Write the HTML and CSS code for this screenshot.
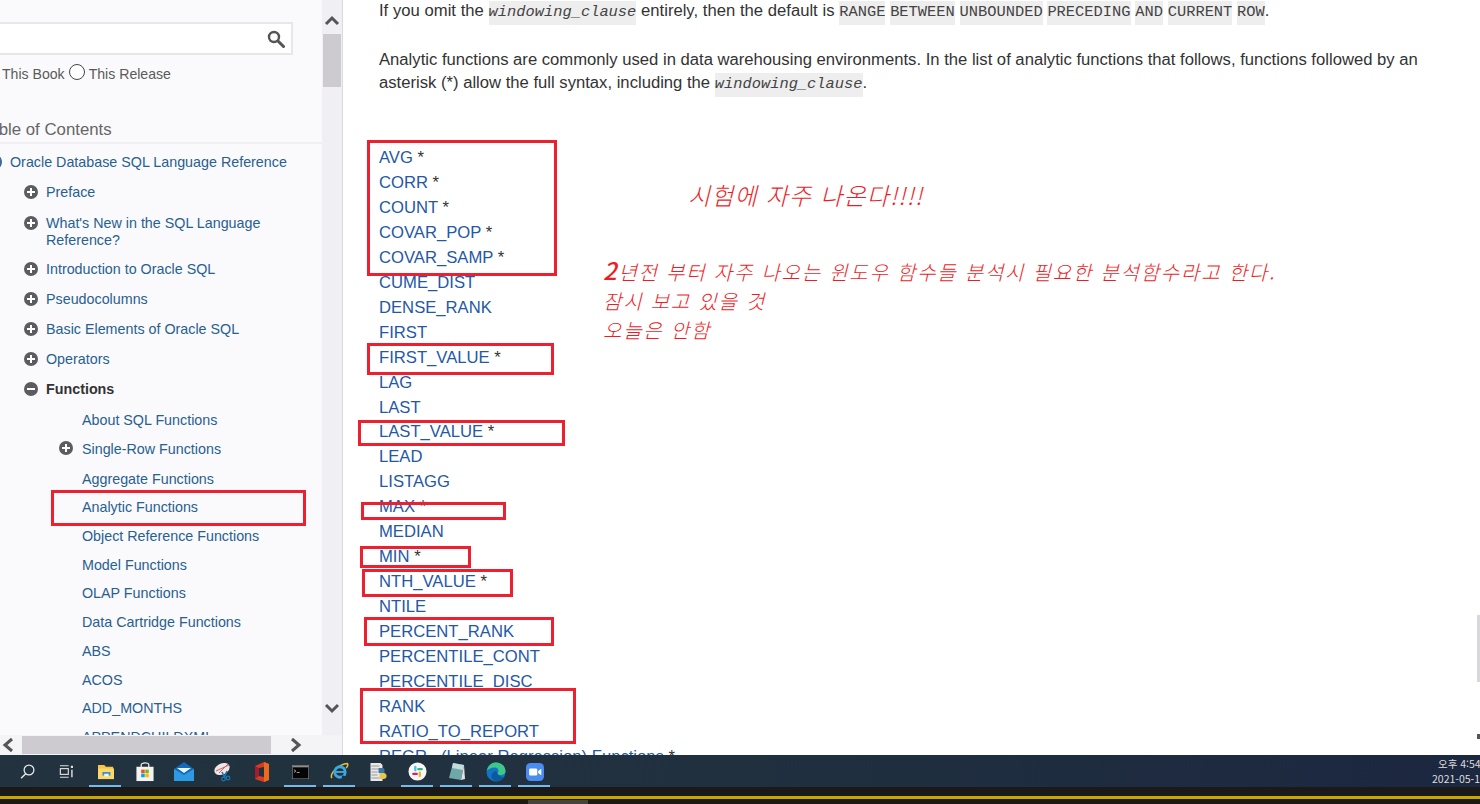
FILE: index.html
```html
<!DOCTYPE html>
<html lang="ko">
<head>
<meta charset="utf-8">
<title>Analytic Functions</title>
<link rel="stylesheet" href="styles.css">
</head>
<body>
<div class="app">
  <div class="main">
    <aside class="side">
      <div class="side-top">
        <div class="toc-pane">
          <div class="search">
            <svg class="search-icon" width="18" height="18" viewBox="0 0 18 18"><circle cx="7" cy="7" r="5" fill="none" stroke="#555" stroke-width="2.4"/><path d="M11 11l5.500 5.500" stroke="#555" stroke-width="3" stroke-linecap="round"/></svg>
          </div>
          <div class="scope"><span>This Book</span><span class="radio"></span><span>This Release</span></div>
          <div class="toc-title">Table of Contents</div>
          <div class="tree">
            <div class="row root"><span class="dot-root"></span><a>Oracle Database SQL Language Reference</a></div>
            <div class="row l1 r-a"><span class="exp"></span><a>Preface</a></div>
            <div class="row l1 tall"><span class="exp"></span><a>What's New in the SQL Language Reference?</a></div>
            <div class="row l1"><span class="exp"></span><a>Introduction to Oracle SQL</a></div>
            <div class="row l1"><span class="exp"></span><a>Pseudocolumns</a></div>
            <div class="row l1"><span class="exp"></span><a>Basic Elements of Oracle SQL</a></div>
            <div class="row l1"><span class="exp"></span><a>Operators</a></div>
            <div class="row l1 open"><span class="exp minus"></span><a>Functions</a></div>
            <div class="row l2 r-b"><a>About SQL Functions</a></div>
            <div class="row l2 r-c"><span class="exp"></span><a>Single-Row Functions</a></div>
            <div class="row l2"><a>Aggregate Functions</a></div>
            <div class="row l2"><a>Analytic Functions</a></div>
            <div class="row l2"><a>Object Reference Functions</a></div>
            <div class="row l2"><a>Model Functions</a></div>
            <div class="row l2"><a>OLAP Functions</a></div>
            <div class="row l2"><a>Data Cartridge Functions</a></div>
            <div class="row l2"><a>ABS</a></div>
            <div class="row l2"><a>ACOS</a></div>
            <div class="row l2"><a>ADD_MONTHS</a></div>
            <div class="row l2"><a>APPENDCHILDXML</a></div>
          </div>
        </div>
        <div class="vbar">
          <svg class="arrow" width="16" height="12" viewBox="0 0 16 12"><path d="M2 10l6-6 6 6" fill="none" stroke="#555" stroke-width="3"/></svg>
          <div class="vthumb"></div>
          <svg class="arrow arrow-down" width="16" height="12" viewBox="0 0 16 12"><path d="M2 2l6 6 6-6" fill="none" stroke="#555" stroke-width="3"/></svg>
        </div>
      </div>
      <div class="hbar">
        <svg width="12" height="16" viewBox="0 0 12 16"><path d="M10 2L3 8l7 6" fill="none" stroke="#555" stroke-width="3"/></svg>
        <div class="hthumb"></div>
        <svg class="arrow-right" width="12" height="16" viewBox="0 0 12 16"><path d="M2 2l7 6-7 6" fill="none" stroke="#555" stroke-width="3"/></svg>
      </div>
    </aside>
    <main class="content">
      <p class="para first">If you omit the <code class="var">windowing_clause</code> entirely, then the default is <code>RANGE</code> <code>BETWEEN</code> <code>UNBOUNDED</code> <code>PRECEDING</code> <code>AND</code> <code>CURRENT</code> <code>ROW</code>.</p>
      <p class="para second">Analytic functions are commonly used in data warehousing environments. In the list of analytic functions that follows, functions followed by an asterisk (*) allow the full syntax, including the <code class="var">windowing_clause</code>.</p>
      <ul class="fn-list">
        <li><a>AVG</a> *</li>
        <li><a>CORR</a> *</li>
        <li><a>COUNT</a> *</li>
        <li><a>COVAR_POP</a> *</li>
        <li><a>COVAR_SAMP</a> *</li>
        <li><a>CUME_DIST</a></li>
        <li><a>DENSE_RANK</a></li>
        <li><a>FIRST</a></li>
        <li><a>FIRST_VALUE</a> *</li>
        <li><a>LAG</a></li>
        <li><a>LAST</a></li>
        <li><a>LAST_VALUE</a> *</li>
        <li><a>LEAD</a></li>
        <li><a>LISTAGG</a></li>
        <li><a>MAX</a> *</li>
        <li><a>MEDIAN</a></li>
        <li><a>MIN</a> *</li>
        <li><a>NTH_VALUE</a> *</li>
        <li><a>NTILE</a></li>
        <li><a>PERCENT_RANK</a></li>
        <li><a>PERCENTILE_CONT</a></li>
        <li><a>PERCENTILE_DISC</a></li>
        <li><a>RANK</a></li>
        <li><a>RATIO_TO_REPORT</a></li>
        <li><a>REGR_ (Linear Regression) Functions</a> *</li>
      </ul>
      <div class="page-thumb"></div>
      <div class="page-mark"></div>
    </main>
  </div>
  <footer class="taskbar">
    <div class="tb-icon"><svg width="15" height="15" viewBox="0 0 20 20"><circle cx="12" cy="8" r="6.500" fill="none" stroke="#e8e8e8" stroke-width="1.700"/><path d="M7.500 13l-6 6" stroke="#e8e8e8" stroke-width="2"/></svg></div>
    <div class="tb-icon"><svg width="15" height="13" viewBox="0 0 20 18"><path d="M1 1h12M1 17h12" stroke="#ddd" stroke-width="1.600"/><rect x="1.500" y="5" width="11" height="8" fill="none" stroke="#ddd" stroke-width="1.600"/><path d="M16 1h3v3h-3zM16.500 6.500h2V17h-2z" fill="#ddd"/></svg></div>
    <div class="tb-icon on"><svg width="18" height="16" viewBox="0 0 20 18"><path d="M1 1h7l2 2h8l1 14H1z" fill="#f6c545"/><path d="M1 5h18v12H1z" fill="#fbd968"/><path d="M6 9h9v4H6z" fill="#3f8fd2"/><path d="M8 11h5v3H8z" fill="#f3f3f3"/></svg></div>
    <div class="tb-icon"><svg width="20" height="20" viewBox="0 0 20 21"><path d="M6 6V3a4 2 0 0 1 8 0v3" fill="none" stroke="#eee" stroke-width="1.300"/><rect x="1" y="5" width="18" height="15" fill="#f2f2f2"/><rect x="6" y="8" width="3.700" height="3.700" fill="#f25022"/><rect x="10.300" y="8" width="3.700" height="3.700" fill="#7fba00"/><rect x="6" y="12.300" width="3.700" height="3.700" fill="#00a4ef"/><rect x="10.300" y="12.300" width="3.700" height="3.700" fill="#ffb900"/></svg></div>
    <div class="tb-icon"><svg width="20" height="19" viewBox="0 0 20 19"><path d="M10 0l10 7v12H0V7z" fill="#1669b8"/><path d="M0 7l10 6 10-6v12H0z" fill="#2f9ae4"/><path d="M3 6h14l-7 5z" fill="#e9f5fd"/></svg></div>
    <div class="tb-icon"><svg width="20" height="20" viewBox="0 0 20 20"><ellipse cx="9" cy="7" rx="8" ry="5.500" transform="rotate(-25 9 7)" fill="#f1e6e6"/><path d="M3 9l13-6M6 11l9-9" stroke="#c8646e" stroke-width="1"/><path d="M9 10l3 6M14 9l-3 7" stroke="#1c78b4" stroke-width="1.600"/><circle cx="10.500" cy="17" r="1.800" fill="none" stroke="#1c78b4" stroke-width="1.200"/><circle cx="15" cy="16" r="1.800" fill="none" stroke="#1c78b4" stroke-width="1.200"/></svg></div>
    <div class="tb-icon"><svg width="16" height="20" viewBox="0 0 16 20"><path d="M1 4l9-4 5 2v16l-5 2-9-3z" fill="#d83b22"/><path d="M10 0l5 2v16l-5 2z" fill="#ea6a1f"/><path d="M5 6l5-1v10l-5-1z" fill="#20303c"/><path d="M1 4l4 2v8l-4 3z" fill="#a51d2d"/></svg></div>
    <div class="tb-icon on"><svg width="17" height="14" viewBox="0 0 18 15"><rect x="0" y="0" width="18" height="15" fill="#050505" stroke="#9a9a9a" stroke-width="1"/><rect x="0.500" y="0.500" width="17" height="2" fill="#8d8d8d"/><path d="M2 5l2 1.500L2 8M5 8h3" fill="none" stroke="#ddd" stroke-width="0.800"/></svg></div>
    <div class="tb-icon on"><svg width="19" height="19" viewBox="0 0 20 20"><path d="M2 17C-1 12 10 2 18 1.500c1.500 1 .5 3-1 5" fill="none" stroke="#eec13a" stroke-width="1.500"/><circle cx="10.500" cy="10.500" r="5.500" fill="none" stroke="#3aa7e0" stroke-width="3"/><path d="M6 10.500h9.500" stroke="#3aa7e0" stroke-width="2"/><path d="M13 14l4 1.500-5 2z" fill="#20303c"/></svg></div>
    <div class="tb-icon"><svg width="19" height="20" viewBox="0 0 18 20"><path d="M1 1h10l2 2v16H1z" fill="#e8e8e8"/><path d="M2 4h8M2 7h7M2 10h6M2 13h6M2 16h8" stroke="#9a9a9a" stroke-width="1"/><path d="M9 6h4a2 2 0 0 1 2 2v3H9z" fill="#3d77a8"/><path d="M10 11h4a3 3 0 0 1 3 2v2a3 3 0 0 1-3 2h-4z" fill="#e8c84a"/></svg></div>
    <div class="tb-icon on"><svg width="19" height="19" viewBox="0 0 20 20"><circle cx="10" cy="10" r="9.500" fill="#f7f7f7"/><rect x="6.500" y="4" width="2.400" height="6" rx="1.200" fill="#36c5f0"/><rect x="11.500" y="4.500" width="2.400" height="6" rx="1.200" fill="#2eb67d" transform="rotate(90 12.700 7.500)"/><rect x="11.200" y="10" width="2.400" height="6" rx="1.200" fill="#ecb22e"/><rect x="6.200" y="9.500" width="2.400" height="6" rx="1.200" fill="#e01e5a" transform="rotate(90 7.400 12.500)"/></svg></div>
    <div class="tb-icon on"><svg width="18" height="20" viewBox="0 0 18 20"><path d="M5 1l11 2-3 15-12-2z" fill="#6fa8ab"/><path d="M5 1l11 2-1 5-11-2z" fill="#c5dadb"/><path d="M13 18l3-15 1 14z" fill="#e2e2e2"/></svg></div>
    <div class="tb-icon on"><svg width="20" height="20" viewBox="0 0 20 20"><circle cx="10" cy="10" r="9.500" fill="#1174c4"/><path d="M.8 9C2 3 6 .5 10 .5c5.500 0 9.500 4 9.500 8.500 0 3-2.500 4-5 4-2 0-3-.8-3-1.500 0-.7 1-1 1-2.500C12.500 7 11 5.500 9 5.500 4.500 5.500 2 7.500.8 9z" fill="#3fc78a"/><path d="M8 18.500c-3-1.500-3.500-7 .5-9 1-.4 2 0 2.500.8.300 2.500 2.500 4.700 5.500 4.700l2 .3c-2 3-6.500 4.500-10.500 3.200z" fill="#0a5a9e"/></svg></div>
    <div class="tb-icon on"><svg width="18" height="18" viewBox="0 0 20 20"><rect width="20" height="20" rx="5" fill="#4a8cf0"/><rect x="3.500" y="6" width="9" height="8" rx="1.500" fill="#fff"/><path d="M13.500 9l3.500-2.500v7L13.500 11z" fill="#fff"/></svg></div>
    <div class="clock"><div class="time">오후 4:54</div><div class="date">2021-05-18</div></div>
  </footer>
  <div class="strip"><div class="strip-line"></div><div class="strip-thumb"></div></div>

  <div class="ann box-toc"></div>
  <div class="ann box-1"></div>
  <div class="ann box-2"></div>
  <div class="ann box-3"></div>
  <div class="ann box-4"></div>
  <div class="ann box-5"></div>
  <div class="ann box-6"></div>
  <div class="ann box-7"></div>
  <div class="ann box-8"></div>
  <div class="note note-a">시험에 자주 나온다!!!!</div>
  <div class="note note-b"><b>2</b>년전 부터 자주 나오는 윈도우 함수들 분석시 필요한 분석함수라고 한다.<br>잠시 보고 있을 것<br>오늘은 안함</div>
</div>
</body>
</html>
```
FILE: styles.css
```css
* { box-sizing: border-box; }
html, body { margin: 0; padding: 0; background: #fff; }
body { font-family: "Liberation Sans", Arial, sans-serif; overflow: hidden; }
.app { position: relative; width: 1480px; height: 804px; display: flex; flex-direction: column; overflow: hidden; }
.main { height: 755px; display: flex; overflow: hidden; }

/* sidebar */
.side { width: 343px; flex: none; display: flex; flex-direction: column; border-right: 1px solid #d9d9e0; }
.side-top { flex: 1; min-height: 0; display: flex; }
.toc-pane { width: 322px; flex: none; background: #fafafc; overflow: hidden; padding-top: 22px; }
.search { width: 303px; height: 33px; margin-left: -10px; background: #fff; border: 2px solid #e6e6ec; display: flex; align-items: center; justify-content: flex-end; padding-right: 6px; }
.scope { display: flex; align-items: center; gap: 4px; height: 20px; margin-top: 9px; padding-left: 2px; font-size: 14.100px; color: #5a5a5a; }
.radio { width: 16px; height: 16px; margin: -5px 0 0 0; border: 1.500px solid #444; border-radius: 50%; background: #fff; }
.toc-title { margin: 36px 0 0 -19px; height: 20px; line-height: 20px; font-size: 16.800px; color: #666; white-space: nowrap; }
.tree { margin-top: 2px; padding-top: 4px; border-top: 2px solid #f0f0f3; font-size: 14.300px; line-height: 16.500px; color: #28608f; }
.row { position: relative; display: flex; align-items: flex-start; height: 30px; padding-top: 6px; white-space: nowrap; }
.row a { color: inherit; }
.root { padding-left: 10px; }
.l1 { padding-left: 46px; }
.r-a { height: 31px; }
.l1.tall { height: 46px; white-space: normal; padding-right: 40px; }
.open { color: #333; font-weight: bold; height: 31px; }
.l2 { padding-left: 82px; height: 28.700px; color: #28608f; font-weight: normal; }
.r-b { height: 29px; }
.r-c { height: 29.700px; }
.exp { position: absolute; left: 24px; top: 7px; width: 14px; height: 14px; border-radius: 50%; background: #5b5b62; }
.exp::before { content: ""; position: absolute; left: 3px; top: 6px; width: 8px; height: 2px; background: #fff; }
.exp::after { content: ""; position: absolute; left: 6px; top: 3px; width: 2px; height: 8px; background: #fff; }
.exp.minus::after { display: none; }
.l2 .exp { left: 59px; top: 6px; }
.dot-root { position: absolute; left: -6px; top: 8px; width: 8px; height: 12px; border-radius: 50%; background: #3e6e98; }
.vbar { width: 20px; flex: none; background: #f0eff3; display: flex; flex-direction: column; align-items: center; padding: 14px 0 0; }
.vthumb { width: 18px; height: 53px; margin-top: 8px; background: #cdcbd0; }
.arrow { flex: none; }
.arrow-down { margin-top: auto; margin-bottom: 20px; }
.hbar { height: 20px; flex: none; background: #f4f4f6; display: flex; align-items: center; padding-left: 2px; }
.hthumb { width: 249px; height: 18px; margin-left: 8px; background: #cdcbd0; }
.arrow-right { margin-left: 19px; }

/* content */
.content { position: relative; flex: 1; min-width: 0; padding-left: 36px; color: #333; font-size: 16.650px; line-height: 23px; overflow: hidden; }
.para { margin: 0; width: 1060px; }
.first { margin-top: -1px; word-spacing: 0.100px; }
.second { margin-top: 26px; }
code { font-family: "Liberation Mono", "Courier New", monospace; font-size: 15.400px; line-height: 1; background: #eee; padding: 2px 0 4px; color: #444; }
code.var { font-style: italic; }
.fn-list { list-style: none; margin: 52px 0 0; padding: 0; font-size: 16.650px; line-height: 24.960px; }
.fn-list a { color: #2458a6; }
.page-thumb { position: absolute; right: 0; top: 615px; width: 3px; height: 67px; background: #d8d8dc; }
.page-mark { position: absolute; right: 0; top: 734px; width: 3px; height: 5px; background: #555; }

/* taskbar */
.taskbar { height: 32px; flex: none; display: flex; padding-left: 8px; background: linear-gradient(90deg, #22333f 0%, #20303f 50%, #1c2740 100%); }
.tb-icon { position: relative; width: 39px; flex: none; height: 32px; padding-top: 1px; display: flex; align-items: center; justify-content: center; }
.tb-icon.on::after { content: ""; position: absolute; left: 3px; right: 4px; bottom: 0; height: 2px; background: #79b8ea; }
.clock { margin-left: auto; width: 48px; flex: none; padding-top: 1px; overflow: hidden; font-family: "Noto Sans CJK KR", "Noto Sans", sans-serif; font-size: 10.500px; line-height: 15px; color: #ddd; white-space: nowrap; }
.time { padding-left: 6px; }
.strip { position: relative; flex: 1; background: #1a1a1a; padding-top: 9px; }
.strip-line { height: 3px; background: #c8a800; }
.strip-thumb { position: absolute; left: 528px; bottom: 0; width: 60px; height: 4px; background: #444; }

/* hand-drawn annotations over the screenshot */
.ann { position: absolute; border: 3px solid #ee2030; }
.box-toc { left: 51px; top: 490px; width: 255px; height: 36px; }
.box-1 { left: 367px; top: 140px; width: 190px; height: 136px; }
.box-2 { left: 367px; top: 343px; width: 187px; height: 32px; }
.box-3 { left: 358px; top: 420px; width: 207px; height: 26px; }
.box-4 { left: 361px; top: 502px; width: 145px; height: 18px; }
.box-5 { left: 360px; top: 546px; width: 111px; height: 22px; }
.box-6 { left: 362px; top: 569px; width: 151px; height: 28px; }
.box-7 { left: 364px; top: 617px; width: 190px; height: 29px; }
.box-8 { left: 360px; top: 688px; width: 216px; height: 56px; }
.note { position: absolute; color: #ee1c25; font-family: "Noto Sans CJK KR", sans-serif; font-style: italic; font-weight: 300; white-space: nowrap; }
.note-a { left: 688px; top: 178px; font-size: 24px; line-height: 34px; letter-spacing: 1.200px; }
.note-b { left: 603px; top: 257px; font-size: 20px; line-height: 29px; letter-spacing: 1.750px; }
.note-b b { font-size: 24px; line-height: 0; font-weight: 500; }
```
